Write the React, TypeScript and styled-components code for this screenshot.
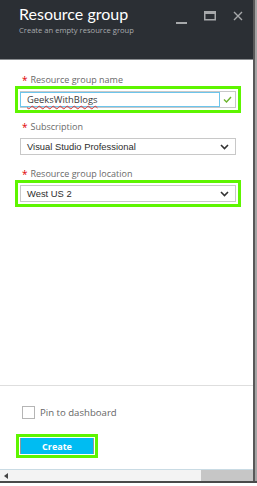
import styled, { createGlobalStyle } from "styled-components";

const GlobalStyle = createGlobalStyle`
  html, body {
    margin: 0;
    padding: 0;
    background: #fff;
  }
  * {
    box-sizing: border-box;
  }
`;

const Screen = styled.div`
  width: 257px;
  height: 486px;
  background: #fff;
  overflow: hidden;
`;

const Window = styled.div`
  display: flex;
  height: 483px;
  border-bottom: 2px solid #4a4a4a;
`;

const Panel = styled.div`
  width: 253px;
  display: flex;
  flex-direction: column;
  font-family: "Open Sans", "Noto Sans", sans-serif;
`;

const Edge = styled.div`
  width: 4px;
  border-left: 2px solid #595959;
  background: #a4a4a4;
`;

const Header = styled.div`
  height: 60px;
  background: #2b2f34;
  border-bottom: 1px solid #8a8d90;
  display: flex;
  justify-content: space-between;
  padding: 4px 0 0 19px;
`;

const TitleBlock = styled.div`
  display: flex;
  flex-direction: column;
`;

const Title = styled.div`
  color: #fff;
  font-family: Lato, "Open Sans", sans-serif;
  font-size: 16px;
  line-height: 20px;
`;

const Subtitle = styled.div`
  color: #a9acaf;
  font-size: 7.6px;
  line-height: 11px;
  margin-top: 1px;
`;

const Controls = styled.div`
  display: flex;
  align-items: flex-start;
  gap: 17px;
  padding: 7px 10px 0 0;
`;

const Body = styled.div`
  flex: 1;
  display: flex;
  flex-direction: column;
  gap: 13px;
  padding: 14px 0 0 20px;
  width: 236px;
  box-sizing: content-box;
`;

const Group = styled.div`
  display: flex;
  flex-direction: column;
  gap: 5px;
`;

const Label = styled.div`
  font-size: 9px;
  line-height: 12px;
  color: #6a6a6a;
  display: flex;
  gap: 3px;

  &::before {
    content: "*";
    color: #e00000;
    font-size: 10px;
    margin-left: 2px;
  }
`;

const Field = styled.div<{ $marked?: boolean }>`
  height: 17px;
  width: 216px;
  border: 1px solid #c8c8c8;
  display: flex;
  align-items: center;
  font-family: "Liberation Sans", Arial, sans-serif;
  font-size: 9.4px;
  color: #2d2d2d;
  ${(p) => p.$marked && `outline: 3px solid #5ef500; outline-offset: 2px;`}
`;

const TextInput = styled.div`
  flex: 1;
  height: 100%;
  border: 1px solid #6cc5ec;
  margin: -1px 0 -1px -1px;
  padding: 0 0 0 6px;
  display: flex;
  align-items: center;
  font-family: "Open Sans", sans-serif;
  font-size: 9.4px;
  color: #3a3a3a;

  span {
    text-decoration: underline wavy #e03030;
    text-decoration-thickness: 1px;
    text-underline-offset: 2px;
  }
`;

const Check = styled.div`
  width: 15px;
  display: flex;
  justify-content: center;
`;

const SelectText = styled.div`
  flex: 1;
  padding-left: 6px;
`;

const Chevron = styled.div`
  width: 22px;
  display: flex;
  justify-content: center;
`;

const Footer = styled.div`
  height: 84px;
  border-top: 1px solid #dedede;
  padding: 20px 0 0 22px;
  display: flex;
  flex-direction: column;
  gap: 19px;
`;

const PinRow = styled.label`
  display: flex;
  align-items: center;
  gap: 5px;
  font-size: 9.6px;
  color: #666;
`;

const Box = styled.span`
  width: 13px;
  height: 13px;
  border: 1px solid #b5b5b5;
  background: #fff;
`;

const CreateButton = styled.button`
  width: 74px;
  height: 16px;
  margin-left: -2px;
  border: none;
  border-left: 1px solid #8a9aa0;
  border-right: 1px solid #8a9aa0;
  background: #00bcf2;
  color: #fff;
  font-family: "Open Sans", sans-serif;
  font-weight: 700;
  font-size: 9px;
  padding: 0;
  outline: 3px solid #5ef500;
  outline-offset: 1px;
`;

const ScrollBar = styled.div`
  height: 12px;
  border-top: 1px solid #c9dbe4;
  display: flex;
  background: #f3f3f3;
`;

const Track = styled.div`
  width: 201px;
  display: flex;
  align-items: center;
  padding-left: 4px;
`;

const Thumb = styled.div`
  flex: 1;
  background: #c6c6c6;
`;

const ChevronIcon = () => (
  <svg width="9" height="6" viewBox="0 0 9 6">
    <path d="M1 1 L4.5 4.5 L8 1" fill="none" stroke="#333" strokeWidth="1.6" />
  </svg>
);

export default function App() {
  return (
    <Screen>
      <GlobalStyle />
      <Window>
        <Panel>
          <Header>
            <TitleBlock>
              <Title>Resource group</Title>
              <Subtitle>Create an empty resource group</Subtitle>
            </TitleBlock>
            <Controls>
              <svg width="11" height="14" viewBox="0 0 11 14">
                <rect x="0" y="11" width="11" height="2" fill="#a7a9ab" />
              </svg>
              <svg width="12" height="10" viewBox="0 0 12 10">
                <rect x="0.75" y="0.75" width="10.5" height="8" fill="none" stroke="#a7a9ab" strokeWidth="1.5" />
                <rect x="0" y="0" width="12" height="3" fill="#a7a9ab" />
              </svg>
              <svg width="10" height="10" viewBox="0 0 10 10">
                <path d="M1 1 L9 9 M9 1 L1 9" stroke="#a7a9ab" strokeWidth="1.4" />
              </svg>
            </Controls>
          </Header>

          <Body>
            <Group>
              <Label>Resource group name</Label>
              <Field $marked>
                <TextInput>
                  <span>GeeksWithBlogs</span>
                </TextInput>
                <Check>
                  <svg width="9" height="7" viewBox="0 0 9 7">
                    <path d="M1 3.5 L3.5 6 L8 1" fill="none" stroke="#6bb42c" strokeWidth="1.4" />
                  </svg>
                </Check>
              </Field>
            </Group>
            <Group>
              <Label>Subscription</Label>
              <Field>
                <SelectText>Visual Studio Professional</SelectText>
                <Chevron>
                  <ChevronIcon />
                </Chevron>
              </Field>
            </Group>
            <Group>
              <Label>Resource group location</Label>
              <Field $marked>
                <SelectText>West US 2</SelectText>
                <Chevron>
                  <ChevronIcon />
                </Chevron>
              </Field>
            </Group>
          </Body>

          <Footer>
            <PinRow>
              <Box />
              Pin to dashboard
            </PinRow>
            <CreateButton>Create</CreateButton>
          </Footer>

          <ScrollBar>
            <Track>
              <svg width="4" height="6" viewBox="0 0 4 6">
                <path d="M4 0 L0 3 L4 6 Z" fill="#444" />
              </svg>
            </Track>
            <Thumb />
          </ScrollBar>
        </Panel>
        <Edge />
      </Window>
    </Screen>
  );
}
